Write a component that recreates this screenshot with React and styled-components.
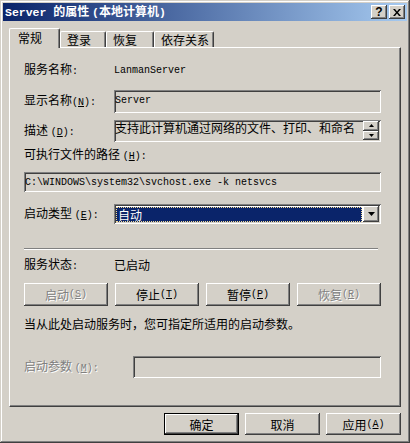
import React from 'react';
import styled, { createGlobalStyle } from 'styled-components';

const GlobalStyle = createGlobalStyle`
  html, body { margin: 0; padding: 0; background: #D4D0C8; }
  body {
    font-family: "Noto Sans CJK SC", "Liberation Sans", sans-serif;
    font-size: 12px;
    color: #000;
  }
  * { box-sizing: border-box; }
`;

const raised = `
  box-shadow: inset -1px -1px 0 #404040, inset 1px 1px 0 #FFFFFF,
    inset -2px -2px 0 #808080, inset 2px 2px 0 #D4D0C8;
`;
const sunken = `
  box-shadow: inset 1px 1px 0 #808080, inset -1px -1px 0 #FFFFFF,
    inset 2px 2px 0 #404040, inset -2px -2px 0 #D4D0C8;
`;

const Window = styled.div`
  width: 410px;
  height: 443px;
  background: #D4D0C8;
  padding: 3px;
  box-shadow: inset -1px -1px 0 #404040, inset 1px 1px 0 #D4D0C8,
    inset -2px -2px 0 #808080, inset 2px 2px 0 #FFFFFF;
  display: flex;
  flex-direction: column;
`;

const TitleBar = styled.div`
  height: 18px;
  background: linear-gradient(to right, #0A246A, #A6CAF0);
  display: flex;
  align-items: center;
  padding: 0 2px 0 2px;
`;

const Title = styled.div`
  flex: 1;
  color: #fff;
  font-weight: bold;
  font-size: 12px;
  line-height: 14px;
  white-space: nowrap;
`;

const Lat = styled.span`
  font-family: "Liberation Mono", monospace;
  font-size: ${p => p.$size || 10}px;
  font-weight: ${p => (p.$bold ? 'bold' : 'normal')};
`;

const TitleBtn = styled.div`
  width: 16px;
  height: 14px;
  margin-left: ${p => p.$ml || 0}px;
  background: #D4D0C8;
  ${raised}
  display: flex;
  align-items: center;
  justify-content: center;
  font-family: "Liberation Sans", sans-serif;
  font-weight: bold;
  font-size: 12px;
  line-height: 12px;
  color: #000;
`;

const TabRow = styled.div`
  margin-top: 7px;
  height: 19px;
  padding-left: 6px;
  display: flex;
  align-items: flex-end;
`;

const Tab = styled.div`
  position: relative;
  z-index: ${p => (p.$active ? 1 : 0)};
  width: ${p => p.$w}px;
  height: ${p => (p.$active ? 20 : 16)}px;
  margin-bottom: ${p => (p.$active ? -1 : 0)}px;
  padding-left: ${p => (p.$active ? 8 : 6)}px;
  background: #D4D0C8;
  border-top: 1px solid #fff;
  border-left: 1px solid #fff;
  border-right: 1px solid #404040;
  border-radius: 2px 2px 0 0;
  box-shadow: inset -1px 0 0 #808080;
  font-size: 12px;
  line-height: ${p => (p.$active ? 17 : 16)}px;
  white-space: nowrap;
`;

const Panel = styled.div`
  margin: 0 6px;
  height: 360px;
  border-top: 1px solid #fff;
  border-left: 1px solid #fff;
  border-right: 1px solid #404040;
  border-bottom: 1px solid #404040;
  box-shadow: inset -1px -1px 0 #808080;
  padding: 0 19px 0 14px;
  display: flex;
  flex-direction: column;
`;

const Row = styled.div`
  margin-top: ${p => p.$mt}px;
  height: ${p => p.$h}px;
  display: flex;
  align-items: center;
  flex-shrink: 0;
`;

const Label = styled.div`
  width: ${p => p.$w || 90}px;
  flex-shrink: 0;
  white-space: nowrap;
  line-height: 16px;
  color: ${p => (p.$disabled ? '#808080' : '#000')};
  text-shadow: ${p => (p.$disabled ? '1px 1px 0 #fff' : 'none')};
`;

const Text = styled.div`
  white-space: nowrap;
  line-height: 16px;
`;

const Box = styled.div`
  flex: 1;
  height: 100%;
  background: ${p => p.$bg || '#D4D0C8'};
  ${sunken}
  padding: 2px 2px 2px 1px;
  display: flex;
  overflow: hidden;
`;

const BoxText = styled.div`
  flex: 1;
  white-space: nowrap;
  line-height: 12px;
`;

const SpinCol = styled.div`
  width: 16px;
  display: flex;
  flex-direction: column;
  margin-top: -1px;
`;

const SpinBtn = styled.div`
  height: ${p => p.$h}px;
  background: #D4D0C8;
  ${raised}
  display: flex;
  align-items: center;
  justify-content: center;
`;

const Highlight = styled.div`
  flex: 1;
  margin: 1px 1px 0 1px;
  background: #0A246A;
  border: 1px dotted #F5DB95;
  color: #fff;
  line-height: 13px;
  padding-left: 1px;
`;

const DropBtn = styled.div`
  width: 16px;
  height: 16px;
  background: #D4D0C8;
  ${raised}
  display: flex;
  align-items: center;
  justify-content: center;
`;

const Separator = styled.div`
  margin-top: ${p => p.$mt}px;
  height: 2px;
  width: calc(100% - 3px);
  border-top: 1px solid #808080;
  border-bottom: 1px solid #fff;
  flex-shrink: 0;
`;

const ButtonGrid = styled.div`
  margin-top: ${p => p.$mt}px;
  height: 23px;
  display: grid;
  grid-template-columns: repeat(4, 84px);
  column-gap: 7px;
  flex-shrink: 0;
`;

const Button = styled.div`
  background: #D4D0C8;
  ${raised}
  display: flex;
  align-items: center;
  justify-content: center;
  font-size: 12px;
  white-space: nowrap;
  color: ${p => (p.$disabled ? '#808080' : '#000')};
  text-shadow: ${p => (p.$disabled ? '1px 1px 0 #fff' : 'none')};
`;

const DefaultButton = styled(Button)`
  box-shadow: inset 0 0 0 1px #000, inset -2px -2px 0 #404040,
    inset 2px 2px 0 #FFFFFF, inset -3px -3px 0 #808080;
`;

const Footer = styled.div`
  margin-top: 6px;
  height: 22px;
  padding-right: 6px;
  display: grid;
  grid-template-columns: repeat(3, 75px);
  column-gap: 6px;
  justify-content: end;
`;

const Arrow = ({ up, w = 7, h = 4 }) => (
  <svg width={w} height={h} viewBox={`0 0 ${w} ${h}`}>
    <polygon
      points={up ? `${w / 2},0 ${w},${h} 0,${h}` : `0,0 ${w},0 ${w / 2},${h}`}
      fill="#000"
    />
  </svg>
);

const CloseGlyph = () => (
  <svg width="8" height="7" viewBox="0 0 8 7">
    <path d="M0 0 L2 0 L4 2.5 L6 0 L8 0 L5 3.5 L8 7 L6 7 L4 4.5 L2 7 L0 7 L3 3.5 Z" fill="#000" />
  </svg>
);

const Acc = ({ children }) => (
  <Lat>
    (<u>{children}</u>)
  </Lat>
);

export default function App() {
  return (
    <>
      <GlobalStyle />
      <Window>
        <TitleBar>
          <Title>
            <Lat $size={11.5} $bold>Server </Lat>的属性 <Lat $size={11.5} $bold>(</Lat>本地计算机<Lat $size={11.5} $bold>)</Lat>
          </Title>
          <TitleBtn>?</TitleBtn>
          <TitleBtn $ml={2}><CloseGlyph /></TitleBtn>
        </TitleBar>

        <TabRow>
          <Tab $active $w={51}>常规</Tab>
          <Tab $w={46}>登录</Tab>
          <Tab $w={48}>恢复</Tab>
          <Tab $w={60}>依存关系</Tab>
        </TabRow>

        <Panel>
          <Row $mt={14} $h={16}>
            <Label>服务名称<Lat>:</Lat></Label>
            <Lat>LanmanServer</Lat>
          </Row>
          <Row $mt={12} $h={23}>
            <Label>显示名称<Acc>N</Acc><Lat>:</Lat></Label>
            <Box>
              <BoxText><Lat>Server</Lat></BoxText>
            </Box>
          </Row>
          <Row $mt={7} $h={22}>
            <Label>描述 <Acc>D</Acc><Lat>:</Lat></Label>
            <Box>
              <BoxText>支持此计算机通过网络的文件、打印、和命名</BoxText>
              <SpinCol>
                <SpinBtn $h={10}><Arrow up w={5} h={3} /></SpinBtn>
                <SpinBtn $h={10}><Arrow w={5} h={3} /></SpinBtn>
              </SpinCol>
            </Box>
          </Row>
          <Row $mt={5} $h={16}>
            <Label $w={200}>可执行文件的路径 <Acc>H</Acc><Lat>:</Lat></Label>
          </Row>
          <Row $mt={9} $h={20}>
            <Box>
              <BoxText><Lat>C:\WINDOWS\system32\svchost.exe -k netsvcs</Lat></BoxText>
            </Box>
          </Row>
          <Row $mt={12} $h={20}>
            <Label>启动类型 <Acc>E</Acc><Lat>:</Lat></Label>
            <Box $bg="#fff">
              <Highlight>自动</Highlight>
              <DropBtn><Arrow /></DropBtn>
            </Box>
          </Row>
          <Separator $mt={24} />
          <Row $mt={7} $h={16}>
            <Label>服务状态<Lat>:</Lat></Label>
            <Text>已启动</Text>
          </Row>
          <ButtonGrid $mt={10}>
            <Button $disabled>启动 <Acc>S</Acc></Button>
            <Button>停止 <Acc>T</Acc></Button>
            <Button>暂停 <Acc>P</Acc></Button>
            <Button $disabled>恢复 <Acc>R</Acc></Button>
          </ButtonGrid>
          <Row $mt={10} $h={16}>
            <Text>当从此处启动服务时，您可指定所适用的启动参数。</Text>
          </Row>
          <Row $mt={24} $h={22}>
            <Label $w={109} $disabled>启动参数 <Acc>M</Acc><Lat>:</Lat></Label>
            <Box />
          </Row>
        </Panel>

        <Footer>
          <DefaultButton>确定</DefaultButton>
          <Button>取消</Button>
          <Button>应用 <Acc>A</Acc></Button>
        </Footer>
      </Window>
    </>
  );
}
